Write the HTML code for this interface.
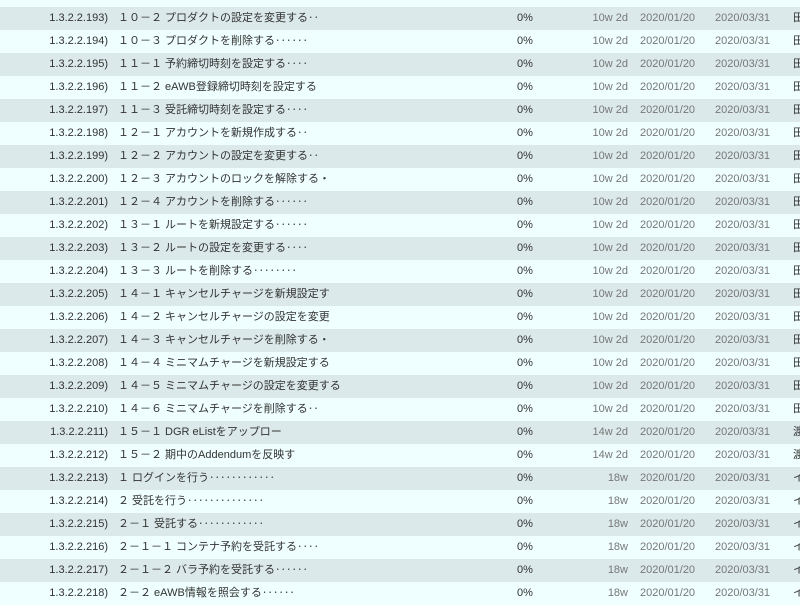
<!DOCTYPE html>
<html><head><meta charset="utf-8"><style>
body{margin:0;width:800px;height:600px;overflow:hidden;background:#effefe;font-family:"Liberation Sans","Noto Sans CJK JP",sans-serif;font-size:11px;color:#333}
.r{position:absolute;left:0;width:800px;height:23px;line-height:23px;white-space:nowrap}
.d{background:#dbe9ea}
.r span{position:absolute;top:0}
.id{right:692px}
.t{left:118px}
.p{left:517px}
.du{right:172px;color:#777}
.s{left:640px;color:#777}
.e{left:715px;color:#777}
.a{left:793px}
</style></head><body>
<div id="c"></div>
<script>
var rows=[
["193","１０－２ プロダクトの設定を変更する‥","10w 2d","田"],
["194","１０－３ プロダクトを削除する‥‥‥","10w 2d","田"],
["195","１１－１ 予約締切時刻を設定する‥‥","10w 2d","田"],
["196","１１－２ eAWB登録締切時刻を設定する","10w 2d","田"],
["197","１１－３ 受託締切時刻を設定する‥‥","10w 2d","田"],
["198","１２－１ アカウントを新規作成する‥","10w 2d","田"],
["199","１２－２ アカウントの設定を変更する‥","10w 2d","田"],
["200","１２－３ アカウントのロックを解除する‧","10w 2d","田"],
["201","１２－４ アカウントを削除する‥‥‥","10w 2d","田"],
["202","１３－１ ルートを新規設定する‥‥‥","10w 2d","田"],
["203","１３－２ ルートの設定を変更する‥‥","10w 2d","田"],
["204","１３－３ ルートを削除する‥‥‥‥","10w 2d","田"],
["205","１４－１ キャンセルチャージを新規設定す","10w 2d","田"],
["206","１４－２ キャンセルチャージの設定を変更","10w 2d","田"],
["207","１４－３ キャンセルチャージを削除する‧","10w 2d","田"],
["208","１４－４ ミニマムチャージを新規設定する","10w 2d","田"],
["209","１４－５ ミニマムチャージの設定を変更する","10w 2d","田"],
["210","１４－６ ミニマムチャージを削除する‥","10w 2d","田"],
["211","１５－１ DGR eListをアップロー","14w 2d","渡"],
["212","１５－２ 期中のAddendumを反映す","14w 2d","渡"],
["213","１ ログインを行う‥‥‥‥‥‥","18w","イ"],
["214","２ 受託を行う‥‥‥‥‥‥‥","18w","イ"],
["215","２－１ 受託する‥‥‥‥‥‥","18w","イ"],
["216","２－１－１ コンテナ予約を受託する‥‥","18w","イ"],
["217","２－１－２ バラ予約を受託する‥‥‥","18w","イ"],
["218","２－２ eAWB情報を照会する‥‥‥","18w","イ"]];
var h="";
rows.forEach(function(r,i){
h+='<div class="r'+(i%2==0?' d':'')+'" style="top:'+(7+i*23)+'px"><span class="id">1.3.2.2.'+r[0]+')</span><span class="t">'+r[1]+'</span><span class="p">0%</span><span class="du">'+r[2]+'</span><span class="s">2020/01/20</span><span class="e">2020/03/31</span><span class="a">'+r[3]+'</span></div>';
});
document.getElementById("c").innerHTML=h;
</script>
</body></html>
